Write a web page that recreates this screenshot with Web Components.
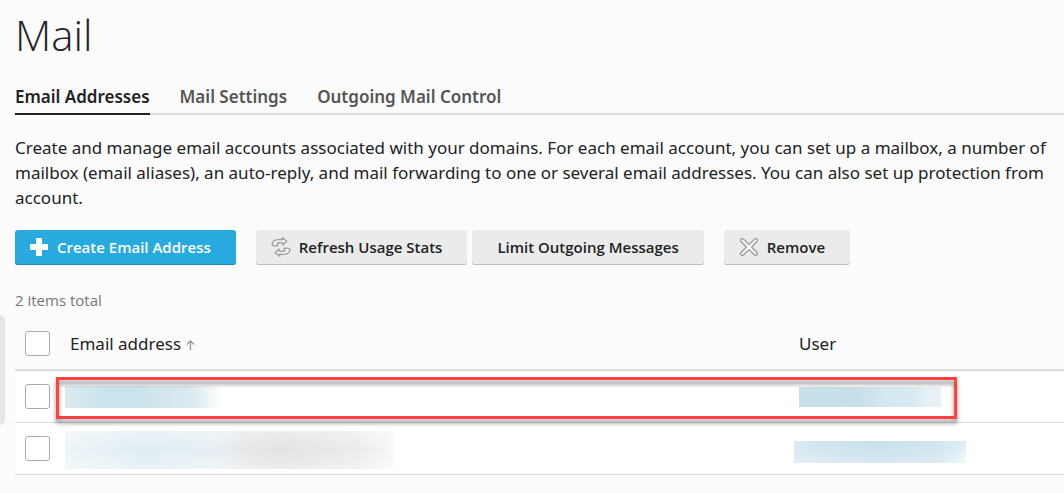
<!DOCTYPE html>
<html lang="en">
<head>
<meta charset="UTF-8">
<title>Mail</title>
<style>
  body {
    margin: 0;
    min-height: 100vh;
    background: #fbfbfb;
    color: #222;
    font: 17px/25px "Noto Sans", "Open Sans", sans-serif;
    overflow: hidden;
  }
</style>
</head>
<body>
<mail-page></mail-page>

<script>
  // Icons used by the buttons
  const ICONS = {
    add: `<path fill="#fff" d="M7 1h6v6h6v6h-6v6H7v-6H1V7h6z"/>`,
    refresh: `<g fill="#f4f4f4" stroke="#a0a0a0" stroke-width="1.4" stroke-linejoin="round">
      <path d="M1 7.500C1.500 4 4.500 2.500 8 2.600L11.500 2.800L11.200 .8L15.800 4.200L12 8L11.800 5.900L8.500 5.800C6 5.800 5.500 7 7 8.600C4 9.200 2 9 1 7.500z"/>
      <path d="M19 12.500C18.500 16 15.500 17.500 12 17.400L8.500 17.200L8.800 19.200L4.200 15.800L8 12L8.200 14.100L11.500 14.200C14 14.200 14.500 13 13 11.400C16 10.800 18 11 19 12.500z"/>
    </g>`,
    remove: `<path fill="#f4f4f4" stroke="#a0a0a0" stroke-width="1.4" stroke-linejoin="round"
      d="M4.200 1.800L10 7.300L15.800 1.800Q17 1.200 18 2.200Q18.800 3.200 18.200 4.200L12.700 10L18.200 15.800Q18.800 16.800 18 17.800Q17 18.800 15.800 18.200L10 12.700L4.200 18.200Q3 18.800 2 17.800Q1.200 16.800 1.800 15.800L7.300 10L1.800 4.200Q1.200 3.200 2 2.200Q3 1.200 4.200 1.800z"/>`
  };

  class MailButton extends HTMLElement {
    constructor() {
      super();
      this.attachShadow({ mode: 'open' });
    }

    connectedCallback() {
      const icon = ICONS[this.getAttribute('icon')];
      this.shadowRoot.innerHTML = `
        <style>
          :host { display: block; }
          button {
            display: flex;
            align-items: center;
            gap: 8px;
            height: 35px;
            padding: 0 25px 2px;
            border: 0;
            border-radius: 3px;
            background: #ebebeb;
            box-shadow: inset 0 -1px #bcbcbc;
            color: #222;
            font: 600 15px/20px "Open Sans", "Noto Sans", sans-serif;
            white-space: nowrap;
            cursor: pointer;
          }
          button.icon { padding-left: 15px; }
          :host([primary]) button {
            padding-left: 14px;
            background: #28aade;
            box-shadow: inset 0 -1px #2088b2;
            color: #fff;
          }
          svg { width: 20px; height: 20px; }
        </style>
        <button type="button" class="${icon ? 'icon' : ''}">
          ${icon ? `<svg viewBox="0 0 20 20" aria-hidden="true">${icon}</svg>` : ''}<slot></slot>
        </button>
      `;
    }
  }

  class MailTabs extends HTMLElement {
    constructor() {
      super();
      this.attachShadow({ mode: 'open' });
      this.shadowRoot.innerHTML = `
        <style>
          :host { display: block; border-bottom: 2px solid #ddd; }
          nav { display: flex; gap: 30px; }
          ::slotted(a) {
            padding: 4px 0;
            margin-bottom: -2px;
            border-bottom: 2px solid transparent;
            color: #555;
            font-weight: 600;
            text-decoration: none;
            white-space: nowrap;
          }
          ::slotted(a[aria-current]) { color: #222; border-color: #222; }
        </style>
        <nav><slot></slot></nav>
      `;
    }
  }

  class MailTable extends HTMLElement {
    constructor() {
      super();
      this.attachShadow({ mode: 'open' });
      this.shadowRoot.innerHTML = `
        <style>
          :host { display: block; position: relative; }
          table {
            width: 100%;
            border-collapse: separate;
            border-spacing: 0;
            table-layout: fixed;
          }
          .check { width: 25px; }
          .user { width: 255px; }
          th, td { height: 51px; padding: 0 10px; text-align: left; font-weight: 400; }
          th { border-bottom: 2px solid #ddd; }
          td { border-bottom: 1px solid #ddd; background: #fff; }
          input {
            appearance: none;
            display: block;
            box-sizing: border-box;
            width: 25px;
            height: 25px;
            margin: 0;
            border: 1px solid #aaa;
            border-radius: 3px;
            background: #fff;
          }
          svg { width: 9px; height: 10px; margin-left: 5px; }
          /* hidden values */
          .blur { display: block; }
          .a1 { width: 157px; height: 22px; margin-left: -5px;
            background: linear-gradient(90deg, #dcebf1, #cbe3eb 25%, #cbe3eb 45%, #dceaf0 82%, #fff); }
          .a2 { width: 142px; height: 20px;
            background: linear-gradient(90deg, #c8e1e9, #c6dfe8 40%, #d4e8ef 60%, #d8e9f0 80%, #e7f2f7 92%); }
          .b1 { width: 328px; height: 38px; margin: 2px 0 0 -5px;
            background: linear-gradient(#fff5, #fff0 50%, #fff5),
              linear-gradient(90deg, #edf5f8, #dfedf3 24%, #e6f0f4 46%, #e6e8e9 54%, #e3e3e3 66%, #ebebeb 88%, #f7f7f7); }
          .b2 { width: 172px; height: 22px; margin: 6px 0 0 -5px;
            background: radial-gradient(ellipse at 48% 10%, #c8e2ea, #d2e6ee 45%, #fff0 90%),
              linear-gradient(90deg, #e3f0f5, #dcebf1 80%, #f0f8fa); }
          .mark {
            position: absolute;
            top: 59px;
            left: 41px;
            right: 107px;
            height: 36px;
            border: 3px solid #ff4141;
            filter: drop-shadow(0 4px 2px #0007);
            pointer-events: none;
          }
        </style>
        <table>
          <thead>
            <tr>
              <th class="check"><input type="checkbox" aria-label="Select all"></th>
              <th>Email address<svg viewBox="0 0 9 10" aria-hidden="true"><path d="M4.500 10V1.500M1 4.500L4.500 1L8 4.500" fill="none" stroke="#999" stroke-width="1.300"/></svg></th>
              <th class="user">User</th>
            </tr>
          </thead>
          <tbody>
            <tr>
              <td><input type="checkbox" aria-label="Select row 1"></td>
              <td><span class="blur a1"></span></td>
              <td><span class="blur a2"></span></td>
            </tr>
            <tr>
              <td><input type="checkbox" aria-label="Select row 2"></td>
              <td><span class="blur b1"></span></td>
              <td><span class="blur b2"></span></td>
            </tr>
          </tbody>
        </table>
        <div class="mark"></div>
      `;
    }
  }

  class MailPage extends HTMLElement {
    constructor() {
      super();
      this.attachShadow({ mode: 'open' });
      this.shadowRoot.innerHTML = `
        <style>
          :host { display: block; padding: 10px 0 18px 15px; }
          h1 { margin: 0 0 20px; font: 300 42px/50px "Open Sans", "Noto Sans", sans-serif; }
          p { margin: 20px 0; white-space: nowrap; }
          .toolbar { display: flex; gap: 20px; }
          .group { display: flex; gap: 5px; }
          .total { margin: 25px 0 8px; color: #777; font: 15px/20px "Open Sans", "Noto Sans", sans-serif; }
          .handle {
            position: absolute;
            left: 0;
            top: 315px;
            width: 5px;
            height: 110px;
            border-radius: 0 5px 5px 0;
            background: #e6e6e6;
          }
        </style>
        <h1>Mail</h1>
        <mail-tabs>
          <a href="#addresses" aria-current="page">Email Addresses</a>
          <a href="#settings">Mail Settings</a>
          <a href="#outgoing">Outgoing Mail Control</a>
        </mail-tabs>
        <p>Create and manage email accounts associated with your domains. For each email account, you can set up a mailbox, a number of<br>
        mailbox (email aliases), an auto-reply, and mail forwarding to one or several email addresses. You can also set up protection from<br>
        account.</p>
        <div class="toolbar">
          <mail-button primary icon="add">Create Email Address</mail-button>
          <div class="group">
            <mail-button icon="refresh">Refresh Usage Stats</mail-button>
            <mail-button>Limit Outgoing Messages</mail-button>
          </div>
          <mail-button icon="remove">Remove</mail-button>
        </div>
        <div class="total">2 items total</div>
        <mail-table></mail-table>
        <div class="handle"></div>
      `;
    }
  }

  customElements.define('mail-button', MailButton);
  customElements.define('mail-tabs', MailTabs);
  customElements.define('mail-table', MailTable);
  customElements.define('mail-page', MailPage);
</script>
</body>
</html>
